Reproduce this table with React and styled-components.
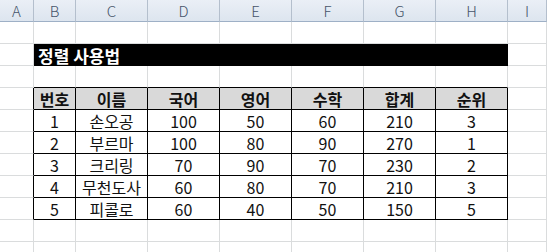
import React from "react";
import styled, { createGlobalStyle } from "styled-components";

const Global = createGlobalStyle`
  html, body { margin: 0; padding: 0; background: #fff; }
  body { font-family: "Noto Sans CJK KR", "Noto Sans", sans-serif; overflow: hidden; }
`;

const Sheet = styled.div`
  display: grid;
  grid-template-columns: 34px 42px repeat(6, 72px) 1fr;
  grid-auto-rows: 22px;
  width: 547px;
  height: 252px;
  overflow: hidden;
`;

const ColHead = styled.div`
  box-sizing: border-box;
  background: linear-gradient(#eaeff6, #dde5ef);
  border-right: 1px solid #b4bfcd;
  border-bottom: 1px solid #9eb0c6;
  color: #46546a;
  font-size: 15px;
  font-weight: 300;
  display: flex;
  align-items: center;
  justify-content: center;
  line-height: 1;
`;

const Cell = styled.div`
  box-sizing: border-box;
  border-right: 1px solid ${(p) => (p.$r ? "#000" : "#dadcdd")};
  border-bottom: 1px solid ${(p) => (p.$b ? "#000" : "#dadcdd")};
  background: ${(p) => (p.$head ? "#d9d9d9" : "#fff")};
  font-weight: ${(p) => (p.$head ? 700 : 400)};
  font-size: 16px;
  color: #111;
  display: flex;
  align-items: center;
  justify-content: center;
  line-height: 1;
  white-space: nowrap;
`;

const TitleBar = styled.div`
  grid-column: span 7;
  background: #000;
  color: #fff;
  font-weight: 700;
  font-size: 17px;
  display: flex;
  align-items: center;
  padding-left: 4px;
  line-height: 1;
`;

const letters = ["A", "B", "C", "D", "E", "F", "G", "H", "I"];
const header = ["번호", "이름", "국어", "영어", "수학", "합계", "순위"];
const data = [
  ["1", "손오공", "100", "50", "60", "210", "3"],
  ["2", "부르마", "100", "80", "90", "270", "1"],
  ["3", "크리링", "70", "90", "70", "230", "2"],
  ["4", "무천도사", "60", "80", "70", "210", "3"],
  ["5", "피콜로", "60", "40", "50", "150", "5"],
];

function EmptyRow({ blackBottom }) {
  return letters.map((l, i) => (
    <Cell key={l} $b={blackBottom && i >= 1 && i <= 7} />
  ));
}

function TableRow({ values, head }) {
  return (
    <>
      <Cell $r />
      {values.map((v, i) => (
        <Cell key={i} $r $b $head={head}>
          {v}
        </Cell>
      ))}
      <Cell />
    </>
  );
}

export default function App() {
  return (
    <>
      <Global />
      <Sheet>
        {letters.map((l) => (
          <ColHead key={l}>{l}</ColHead>
        ))}
        <EmptyRow />
        <Cell />
        <TitleBar>정렬 사용법</TitleBar>
        <Cell />
        <EmptyRow blackBottom />
        <TableRow values={header} head />
        {data.map((r, i) => (
          <TableRow key={i} values={r} />
        ))}
        <EmptyRow />
        <EmptyRow />
      </Sheet>
    </>
  );
}
